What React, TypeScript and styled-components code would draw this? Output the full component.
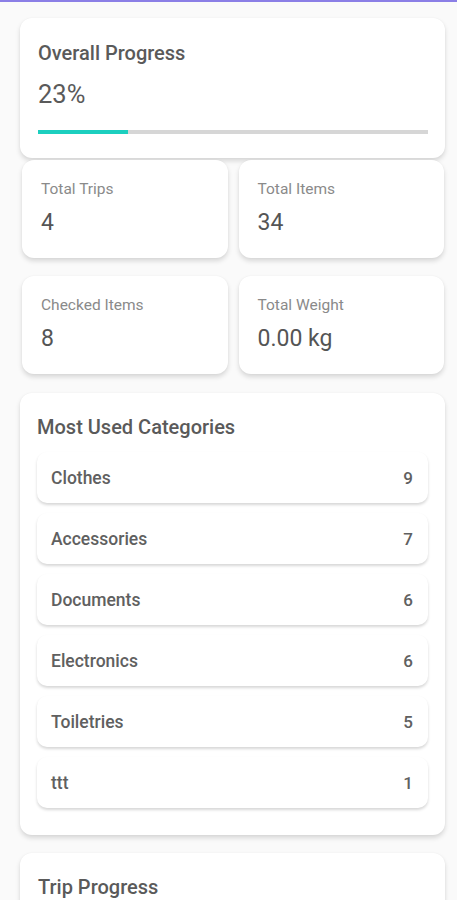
import styled, { createGlobalStyle } from "styled-components"

interface Stat {
  label: string
  value: string
}

interface Category {
  name: string
  count: number
}

const GlobalStyle = createGlobalStyle`
  html, body {
    margin: 0;
    padding: 0;
    background: #fafafa;
    font-family: Roboto, "Noto Sans", sans-serif;
    color: #5a5a5a;
  }
`

const TopLine = styled.div`
  height: 2px;
  background: #8b7fe6;
`

const Page = styled.div`
  display: flex;
  flex-direction: column;
  padding: 16px 12px 0 20px;
`

const Card = styled.div`
  background: #fff;
  border-radius: 12px;
  box-shadow: 0 3px 5px rgba(0, 0, 0, 0.14), 0 0 2px rgba(0, 0, 0, 0.04);
`

const ProgressCard = styled(Card)`
  padding: 23px 17px 24px 18px;
`

const Title = styled.div`
  font-size: 20px;
  line-height: 24px;
  font-weight: 500;
  color: #5a5a5a;
`

const Percent = styled.div`
  margin-top: 15px;
  font-size: 25.5px;
  line-height: 28px;
  color: #5a5a5a;
`

const Track = styled.div`
  margin-top: 22px;
  height: 4px;
  background: #d6d6d6;
`

const Fill = styled.div`
  height: 100%;
  background: #1ccfbf;
`

const StatGrid = styled.div<{ $top: number }>`
  display: grid;
  grid-template-columns: 1fr 1fr;
  gap: 11px;
  margin: ${(p) => p.$top}px 1px 0 2px;
`

const StatCard = styled(Card)`
  padding: 20px 18px 21px 19px;
`

const StatLabel = styled.div`
  font-size: 15.5px;
  line-height: 18px;
  color: #8a8a8a;
`

const StatValue = styled.div`
  margin-top: 11px;
  font-size: 23px;
  line-height: 28px;
  color: #555;
`

const CategoryCard = styled(Card)`
  margin-top: 19px;
  padding: 22px 17px 27px 17px;
`

const CategoryList = styled.div`
  display: flex;
  flex-direction: column;
  gap: 10px;
  margin-top: 13px;
`

const CategoryRow = styled.div`
  display: flex;
  align-items: center;
  justify-content: space-between;
  height: 51px;
  padding: 0 15px 0 14px;
  background: #fff;
  border-radius: 10px;
  box-shadow: 0 2px 3px rgba(0, 0, 0, 0.16);
  font-size: 17.5px;
  font-weight: 500;
  color: #606060;
`

const Count = styled.span`
  font-size: 17px;
`

const TripCard = styled(Card)`
  margin-top: 18px;
  padding: 22px 17px 40px 18px;
`

const stats: Stat[][] = [
  [
    { label: "Total Trips", value: "4" },
    { label: "Total Items", value: "34" },
  ],
  [
    { label: "Checked Items", value: "8" },
    { label: "Total Weight", value: "0.00 kg" },
  ],
]

const categories: Category[] = [
  { name: "Clothes", count: 9 },
  { name: "Accessories", count: 7 },
  { name: "Documents", count: 6 },
  { name: "Electronics", count: 6 },
  { name: "Toiletries", count: 5 },
  { name: "ttt", count: 1 },
]

const progress = 23

export default function App() {
  return (
    <>
      <GlobalStyle />
      <TopLine />
      <Page>
        <ProgressCard>
          <Title>Overall Progress</Title>
          <Percent>{progress}%</Percent>
          <Track>
            <Fill style={{ width: `${progress}%` }} />
          </Track>
        </ProgressCard>
        {stats.map((row, i) => (
          <StatGrid $top={i === 0 ? 2 : 18} key={i}>
            {row.map((s) => (
              <StatCard key={s.label}>
                <StatLabel>{s.label}</StatLabel>
                <StatValue>{s.value}</StatValue>
              </StatCard>
            ))}
          </StatGrid>
        ))}
        <CategoryCard>
          <Title>Most Used Categories</Title>
          <CategoryList>
            {categories.map((c) => (
              <CategoryRow key={c.name}>
                <span>{c.name}</span>
                <Count>{c.count}</Count>
              </CategoryRow>
            ))}
          </CategoryList>
        </CategoryCard>
        <TripCard>
          <Title>Trip Progress</Title>
        </TripCard>
      </Page>
    </>
  )
}
